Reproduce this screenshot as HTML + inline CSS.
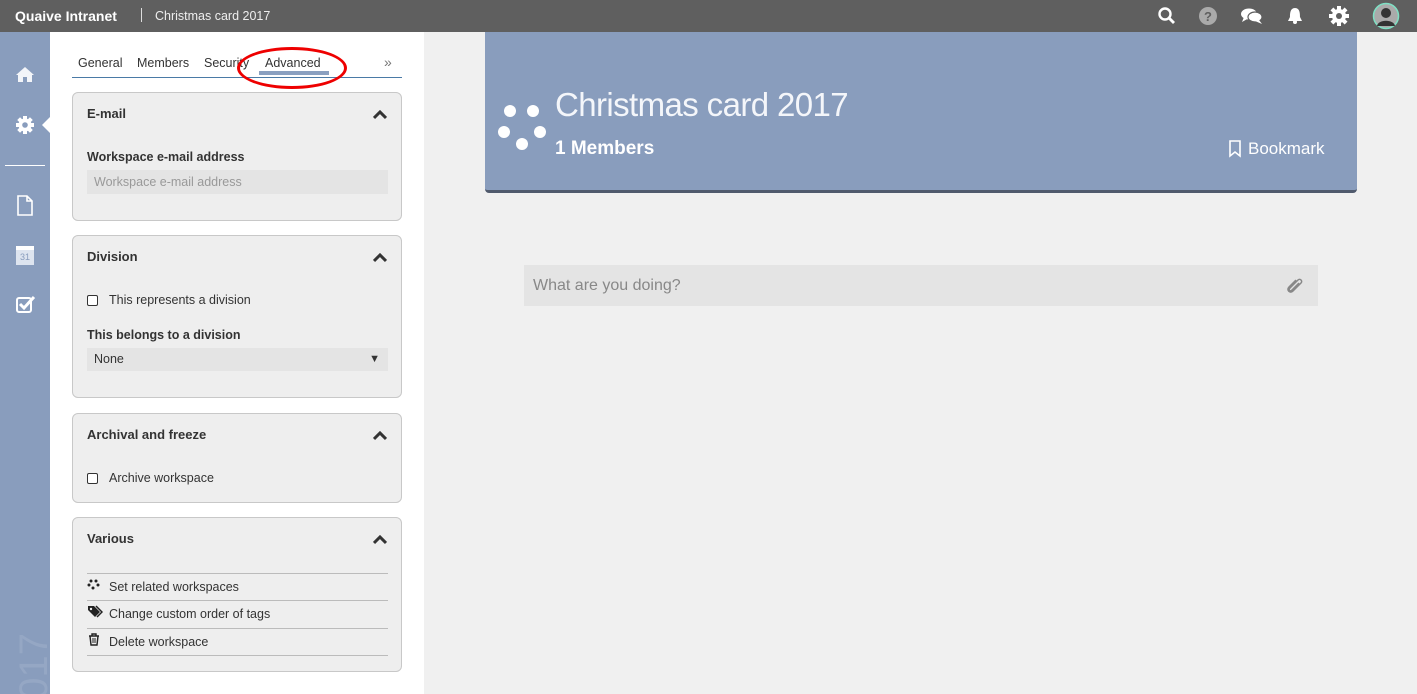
<!DOCTYPE html>
<html><head><meta charset="utf-8"><style>
*{margin:0;padding:0;box-sizing:border-box}
html,body{width:1417px;height:694px;overflow:hidden}
body{background:#f0f0f0;font-family:"Liberation Sans",sans-serif;color:#333;position:relative;font-size:13px}
.a{position:absolute}
#top{left:0;top:0;width:1417px;height:32px;background:#5f5f5f;color:#fff}
#side{left:0;top:32px;width:50px;height:662px;background:#899dbd;overflow:hidden}
#panel{left:50px;top:32px;width:374px;height:662px;background:#fff}
.box{position:absolute;left:72px;width:330px;background:#eee;border:1px solid #c8c8c8;border-radius:6px}
.h{position:absolute;left:14px;font-weight:bold;font-size:13px;color:#333}
.car{position:absolute;right:14px;width:14px;height:10px}
.lbl{position:absolute;left:14px;font-weight:bold;font-size:12.5px}
.cb{position:absolute;left:14px;width:11px;height:11px;border:1px solid #333;border-radius:2px;background:#fff}
.t{position:absolute;left:36px;font-size:12.5px}
.ln{position:absolute;left:14px;width:301px;height:1px;background:#bbb}
</style></head><body>
<div class="a" id="top">
<div class="a" style="left:15px;top:8px;font-weight:bold;font-size:14px">Quaive Intranet</div>
<div class="a" style="left:141px;top:8px;width:1px;height:14px;background:#ddd"></div>
<div class="a" style="left:155px;top:9px;font-size:12.5px;color:#eee">Christmas card 2017</div>
<svg class="a" style="left:1157px;top:6px" width="20" height="20"><circle cx="8" cy="8" r="5.5" fill="none" stroke="#fff" stroke-width="2.4"/><line x1="12" y1="12" x2="17" y2="17" stroke="#fff" stroke-width="2.8"/></svg>
<svg class="a" style="left:1198px;top:6px" width="20" height="20"><circle cx="10" cy="10" r="9" fill="#aaa"/><text x="10" y="15" text-anchor="middle" font-size="13" font-weight="bold" fill="#5f5f5f" font-family="Liberation Sans">?</text></svg>
<svg class="a" style="left:1240px;top:6px" width="24" height="20"><ellipse cx="9" cy="8" rx="8" ry="5.5" fill="#fff"/><path d="M4 11 L2 16 L9 12Z" fill="#fff"/><ellipse cx="15" cy="11" rx="7" ry="5" fill="#fff" stroke="#5f5f5f" stroke-width="1.2"/><path d="M19 14 L22 18 L15 15Z" fill="#fff"/></svg>
<svg class="a" style="left:1286px;top:6px" width="18" height="20"><path d="M9 2 C4 2 4 8 4 11 L2 15 L16 15 L14 11 C14 8 14 2 9 2Z" fill="#fff"/><circle cx="9" cy="16" r="2" fill="#fff"/></svg>
<svg class="a" style="left:1328px;top:5px" width="22" height="22" viewBox="0 0 22 22"><g fill="#fff"><circle cx="11" cy="11" r="7"/><rect x="9" y="1" width="4" height="20"/><rect x="1" y="9" width="20" height="4"/><rect x="9" y="1" width="4" height="20" transform="rotate(45 11 11)"/><rect x="9" y="1" width="4" height="20" transform="rotate(-45 11 11)"/></g><circle cx="11" cy="11" r="3" fill="#5f5f5f"/></svg>
<svg class="a" style="left:1372px;top:2px" width="28" height="28"><circle cx="14" cy="14" r="12.5" fill="#aaa" stroke="#7fe0c4" stroke-width="1.5"/><circle cx="14" cy="11" r="5" fill="#333"/><path d="M5 24 C6 17 22 17 23 24 Z" fill="#333"/></svg>
</div>
<div class="a" id="side">
<svg class="a" style="left:15px;top:34px" width="20" height="18"><path d="M10 1 L1 9 L3 9 L3 16 L8 16 L8 11 L12 11 L12 16 L17 16 L17 9 L19 9Z" fill="#fff" opacity=".9"/></svg>
<svg class="a" style="left:14px;top:82px" width="22" height="22" viewBox="0 0 22 22"><g fill="#fff"><circle cx="11" cy="11" r="6.5"/><rect x="9" y="2" width="4" height="18"/><rect x="2" y="9" width="18" height="4"/><rect x="9" y="2" width="4" height="18" transform="rotate(45 11 11)"/><rect x="9" y="2" width="4" height="18" transform="rotate(-45 11 11)"/></g><circle cx="11" cy="11" r="2.8" fill="#899dbd"/></svg>
<div class="a" style="left:42px;top:85px;width:0;height:0;border-top:8px solid transparent;border-bottom:8px solid transparent;border-right:8px solid #fff"></div>
<div class="a" style="left:5px;top:133px;width:40px;height:1px;background:#fff"></div>
<svg class="a" style="left:16px;top:163px" width="18" height="22"><path d="M2 1 L11 1 L16 6 L16 20 L2 20Z M11 1 L11 6 L16 6" fill="none" stroke="#fff" stroke-width="1.6"/></svg>
<div class="a" style="left:16px;top:214px;width:18px;height:19px;background:#dde4ef;border-top:4px solid #fff;font-size:9px;color:#899dbd;text-align:center;line-height:14px">31</div>
<svg class="a" style="left:16px;top:263px" width="20" height="18"><rect x="1" y="3" width="14" height="14" rx="2" fill="none" stroke="#fff" stroke-width="2"/><path d="M4 9 L8 13 L18 2" fill="none" stroke="#fff" stroke-width="3"/></svg>
<div class="a" style="left:16px;top:690px;font-size:40px;color:#95a7c4;transform:rotate(-90deg);transform-origin:left top;line-height:36px">2017</div>
</div>
<div class="a" id="panel"></div>
<div class="a" style="left:78px;top:56px;font-size:12.5px">General</div>
<div class="a" style="left:137px;top:56px;font-size:12.5px">Members</div>
<div class="a" style="left:204px;top:56px;font-size:12.5px">Security</div>
<div class="a" style="left:265px;top:56px;font-size:12.5px">Advanced</div>
<div class="a" style="left:384px;top:54px;font-size:14px;color:#777">»</div>
<div class="a" style="left:72px;top:77px;width:330px;height:1px;background:#4a7aa6"></div>
<div class="a" style="left:259px;top:71px;width:70px;height:4px;background:#8aa0c0"></div>
<div class="a" style="left:237px;top:47px;width:110px;height:42px;border:3px solid #e00;border-radius:50%"></div>

<div class="box" style="top:92px;height:129px">
<div class="h" style="top:13px">E-mail</div>
<svg class="car" style="top:17px" viewBox="0 0 14 10"><path d="M1 8 L7 2 L13 8" fill="none" stroke="#333" stroke-width="3"/></svg>
<div class="lbl" style="top:57px">Workspace e-mail address</div>
<div class="a" style="left:14px;top:77px;width:301px;height:24px;background:#e4e4e4;color:#999;font-size:12.5px;padding:5px 7px">Workspace e-mail address</div>
</div>
<div class="box" style="top:235px;height:163px">
<div class="h" style="top:13px">Division</div>
<svg class="car" style="top:17px" viewBox="0 0 14 10"><path d="M1 8 L7 2 L13 8" fill="none" stroke="#333" stroke-width="3"/></svg>
<div class="cb" style="top:59px"></div><div class="t" style="top:57px">This represents a division</div>
<div class="lbl" style="top:92px">This belongs to a division</div>
<div class="a" style="left:14px;top:112px;width:301px;height:23px;background:#e4e4e4;font-size:12.5px;padding:4px 7px">None<span style="position:absolute;right:8px;top:5px;font-size:11px">▼</span></div>
</div>
<div class="box" style="top:413px;height:90px">
<div class="h" style="top:13px">Archival and freeze</div>
<svg class="car" style="top:17px" viewBox="0 0 14 10"><path d="M1 8 L7 2 L13 8" fill="none" stroke="#333" stroke-width="3"/></svg>
<div class="cb" style="top:59px"></div><div class="t" style="top:57px">Archive workspace</div>
</div>
<div class="box" style="top:517px;height:155px">
<div class="h" style="top:13px">Various</div>
<svg class="car" style="top:17px" viewBox="0 0 14 10"><path d="M1 8 L7 2 L13 8" fill="none" stroke="#333" stroke-width="3"/></svg>
<div class="ln" style="top:55px"></div>
<svg class="a" style="left:14px;top:61px" width="14" height="12"><g fill="#222"><circle cx="4" cy="2" r="1.5"/><circle cx="9" cy="2" r="1.5"/><circle cx="2" cy="6" r="1.5"/><circle cx="11" cy="6" r="1.5"/><circle cx="6" cy="9" r="1.5"/></g></svg>
<div class="t" style="top:62px">Set related workspaces</div>
<div class="ln" style="top:82px"></div>
<svg class="a" style="left:14px;top:87px" width="16" height="13"><path d="M1 1 L7 1 L13 7 L8 12 L1 5Z" fill="#222"/><path d="M9 1 L15 7 L10 12" fill="none" stroke="#222" stroke-width="1.5"/><circle cx="4" cy="4" r="1.2" fill="#eee"/></svg>
<div class="t" style="top:89px">Change custom order of tags</div>
<div class="ln" style="top:110px"></div>
<svg class="a" style="left:15px;top:115px" width="12" height="13"><path d="M1 3 L11 3 M4 3 L4 1 L8 1 L8 3 M2 3 L3 12 L9 12 L10 3" fill="none" stroke="#222" stroke-width="1.4"/><path d="M5 5 L5 10 M7 5 L7 10" stroke="#222"/></svg>
<div class="t" style="top:117px">Delete workspace</div>
<div class="ln" style="top:137px"></div>
</div>

<div class="a" style="left:485px;top:32px;width:872px;height:161px;background:#899dbd;border-radius:0 0 4px 4px;border-bottom:3px solid #505a6d">
<svg class="a" style="left:12px;top:70px" width="52" height="52"><g fill="#fff"><circle cx="13" cy="9" r="6"/><circle cx="36" cy="9" r="6"/><circle cx="7" cy="30" r="6"/><circle cx="43" cy="30" r="6"/><circle cx="25" cy="42" r="6"/></g></svg>
<div class="a" style="left:70px;top:54px;font-size:33px;color:#f4f6fa;letter-spacing:-0.6px">Christmas card 2017</div>
<div class="a" style="left:70px;top:106px;font-size:19px;color:#fff;font-weight:bold">1 Members</div>
<svg class="a" style="left:743px;top:108px" width="14" height="18"><path d="M2 1 L12 1 L12 16 L7 12 L2 16Z" fill="none" stroke="#fff" stroke-width="1.6"/></svg>
<div class="a" style="left:763px;top:107px;font-size:17px;color:#fff">Bookmark</div>
</div>
<div class="a" style="left:524px;top:265px;width:794px;height:41px;background:#e4e4e4">
<div class="a" style="left:9px;top:12px;font-size:16px;color:#888">What are you doing?</div>
<svg class="a" style="left:762px;top:11px" width="18" height="20"><path d="M13 7 L6 14 C4 16 2 14 4 12 L12 4 C14 2 17 5 15 7 L7 15 C4 18 0 14 3 11 L10 4" fill="none" stroke="#888" stroke-width="1.5"/></svg>
</div>
</body></html>
